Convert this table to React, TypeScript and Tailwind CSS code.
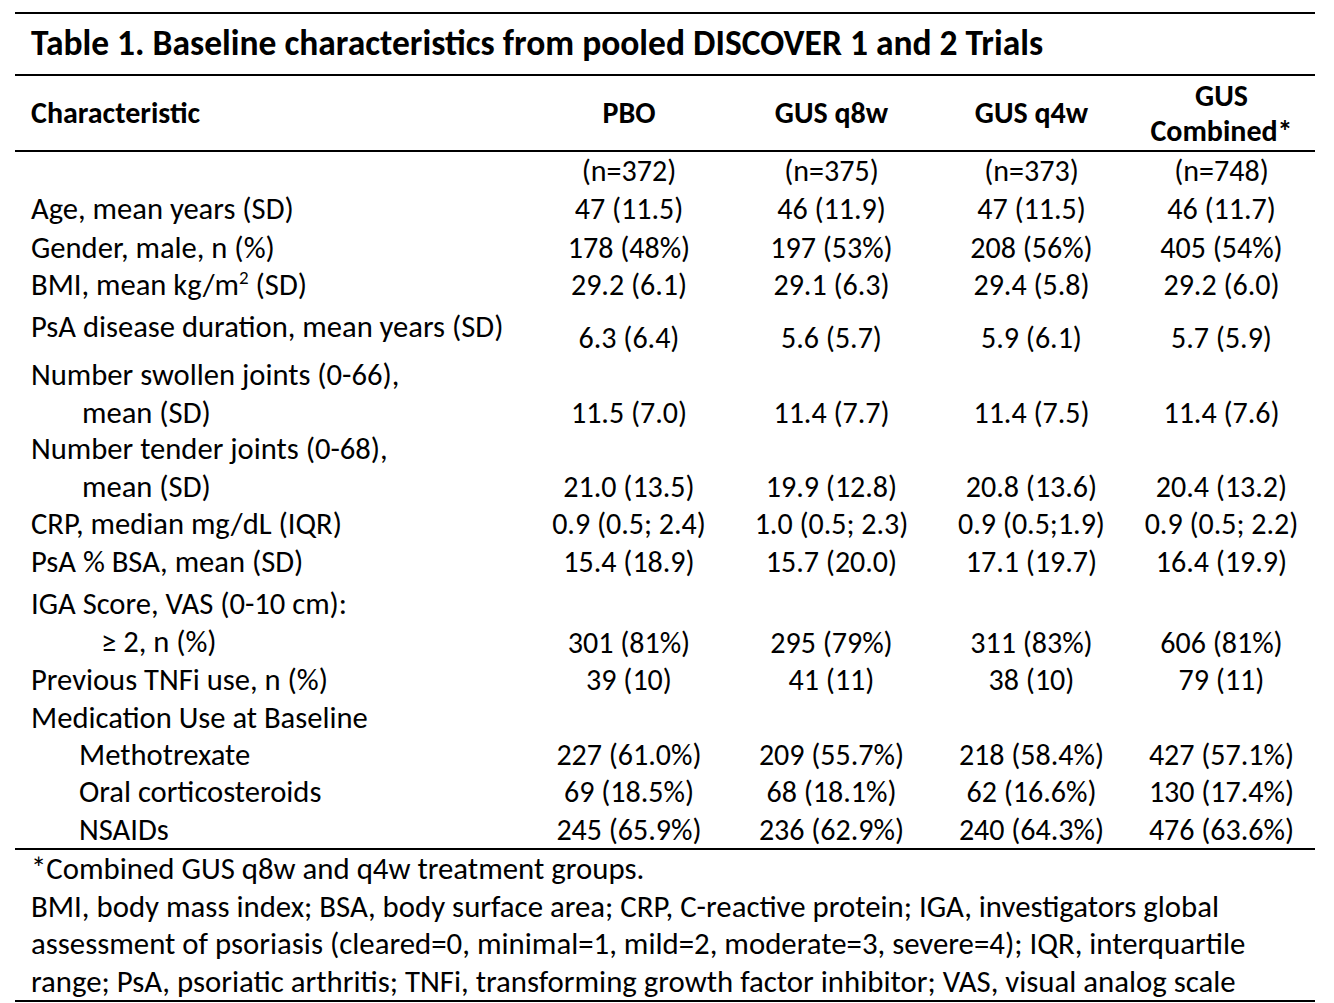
const cols = "grid grid-cols-[515px_198px_207px_193px_187px]";

type Row = {
  label: React.ReactNode[];
  values: string[];
  h: string;
  labelPad?: string;
  valueAlign?: string;
};

const rows: Row[] = [
  { label: [""], values: ["(n=372)", "(n=375)", "(n=373)", "(n=748)"], h: "h-[38px]" },
  { label: ["Age, mean years (SD)"], values: ["47 (11.5)", "46 (11.9)", "47 (11.5)", "46 (11.7)"], h: "h-[39px]" },
  { label: ["Gender, male, n (%)"], values: ["178 (48%)", "197 (53%)", "208 (56%)", "405 (54%)"], h: "h-[37px]" },
  {
    label: [
      <>
        BMI, mean kg/m<sup className="relative -top-[11px] text-[19px]">2</sup> (SD)
      </>,
    ],
    values: ["29.2 (6.1)", "29.1 (6.3)", "29.4 (5.8)", "29.2 (6.0)"],
    h: "h-[42px]",
  },
  {
    label: ["PsA disease duration, mean years (SD)"],
    values: ["6.3 (6.4)", "5.6 (5.7)", "5.9 (6.1)", "5.7 (5.9)"],
    h: "h-[48px]",
    valueAlign: "self-end",
  },
  {
    label: ["Number swollen joints (0-66),", <span className="pl-[51px]">mean (SD)</span>],
    values: ["11.5 (7.0)", "11.4 (7.7)", "11.4 (7.5)", "11.4 (7.6)"],
    h: "h-[74px]",
    valueAlign: "self-end",
  },
  {
    label: ["Number tender joints (0-68),", <span className="pl-[51px]">mean (SD)</span>],
    values: ["21.0 (13.5)", "19.9 (12.8)", "20.8 (13.6)", "20.4 (13.2)"],
    h: "h-[75px]",
    valueAlign: "self-end",
  },
  { label: ["CRP, median mg/dL (IQR)"], values: ["0.9 (0.5; 2.4)", "1.0 (0.5; 2.3)", "0.9 (0.5;1.9)", "0.9 (0.5; 2.2)"], h: "h-[38px]" },
  { label: ["PsA % BSA, mean (SD)"], values: ["15.4 (18.9)", "15.7 (20.0)", "17.1 (19.7)", "16.4 (19.9)"], h: "h-[38px]" },
  {
    label: ["IGA Score, VAS (0-10 cm):", <span className="pl-[70px]">≥ 2, n (%)</span>],
    values: ["301 (81%)", "295 (79%)", "311 (83%)", "606 (81%)"],
    h: "h-[80px]",
    labelPad: "pt-[4px]",
    valueAlign: "self-end",
  },
  { label: ["Previous TNFi use, n (%)"], values: ["39 (10)", "41 (11)", "38 (10)", "79 (11)"], h: "h-[38px]" },
  { label: ["Medication Use at Baseline"], values: ["", "", "", ""], h: "h-[37px]" },
  { label: [<span className="pl-[48px]">Methotrexate</span>], values: ["227 (61.0%)", "209 (55.7%)", "218 (58.4%)", "427 (57.1%)"], h: "h-[37px]" },
  { label: [<span className="pl-[48px]">Oral corticosteroids</span>], values: ["69 (18.5%)", "68 (18.1%)", "62 (16.6%)", "130 (17.4%)"], h: "h-[38px]" },
  { label: [<span className="pl-[48px]">NSAIDs</span>], values: ["245 (65.9%)", "236 (62.9%)", "240 (64.3%)", "476 (63.6%)"], h: "h-[37px]" },
];

const notes = [
  "*Combined GUS q8w and q4w treatment groups.",
  "BMI, body mass index; BSA, body surface area; CRP, C-reactive protein; IGA, investigators global",
  "assessment of psoriasis (cleared=0, minimal=1, mild=2, moderate=3, severe=4); IQR, interquartile",
  "range; PsA, psoriatic arthritis; TNFi, transforming growth factor inhibitor; VAS, visual analog scale",
];

export default function App() {
  return (
    <div className="min-h-[1003px] bg-white pl-[15px] pt-[12px] font-[Carlito,Calibri,Lato,sans-serif] text-[30px] leading-[37.5px] text-black">
      <div className="w-[1300px]">
        <div className="h-[2px] bg-black" />
        <div className="flex h-[60px] items-center whitespace-nowrap pl-[16px] text-[35.5px] font-bold">
          Table 1. Baseline characteristics from pooled DISCOVER 1 and 2 Trials
        </div>
        <div className="h-[2px] bg-black" />

        {/* Header row */}
        <div className={`${cols} h-[74px] items-center font-bold`}>
          <div className="pl-[16px]">Characteristic</div>
          <div className="text-center">PBO</div>
          <div className="text-center">GUS q8w</div>
          <div className="text-center">GUS q4w</div>
          <div className="text-center leading-[35px]">
            GUS
            <br />
            Combined*
          </div>
        </div>
        <div className="h-[2px] bg-black" />

        {/* Body */}
        {rows.map((r, i) => (
          <div key={i} className={`${cols} ${r.h}`}>
            <div className={`flex flex-col whitespace-nowrap pl-[16px] text-[30.6px] ${r.labelPad ?? ""}`}>
              {r.label.map((l, j) => (
                <div key={j}>{l}</div>
              ))}
            </div>
            {r.values.map((v, j) => (
              <div key={j} className={`whitespace-nowrap text-center ${r.valueAlign ?? ""}`}>
                {v}
              </div>
            ))}
          </div>
        ))}
        <div className="h-[2px] bg-black" />

        {/* Footnotes */}
        <div className="pl-[16px] text-[30.8px]">
          {notes.map((n) => (
            <div key={n} className="whitespace-nowrap">
              {n}
            </div>
          ))}
        </div>
        <div className="h-[2px] bg-black" />
      </div>
    </div>
  );
}
